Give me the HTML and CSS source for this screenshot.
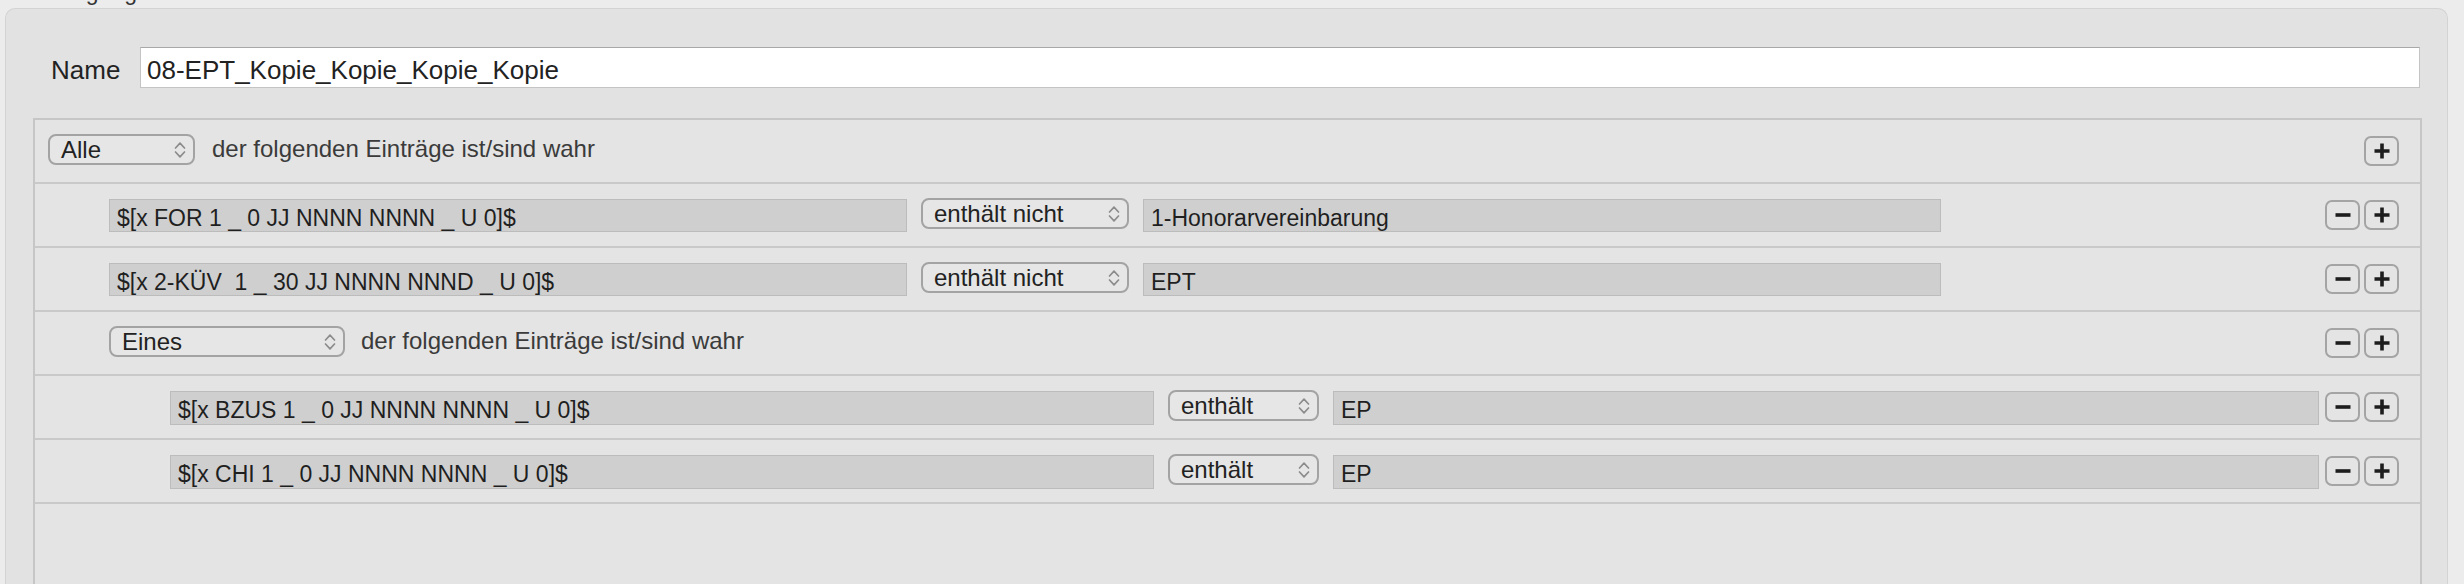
FILE: index.html
```html
<!DOCTYPE html>
<html lang="de">
<head>
<meta charset="utf-8">
<title>Bedingung</title>
<link rel="stylesheet" href="styles.css">
</head>
<body>
<div class="legend">Bedingung</div>
<div class="box">
  <div class="name-row">
    <span class="name-label">Name</span>
    <div class="name-field">08-EPT_Kopie_Kopie_Kopie_Kopie</div>
  </div>
  <div class="rules">
    <div class="row lvl1">
      <div class="popup w-alle"><span class="popup-text">Alle</span><svg class="chev" viewBox="0 0 12 18" width="12" height="18"><path d="M1.5 7 L6 2.2 L10.5 7 M1.5 11 L6 15.8 L10.5 11"/></svg></div>
      <span class="group-label">der folgenden Einträge ist/sind wahr</span>
      <div class="btns">
        <div class="btn"><svg viewBox="0 0 16 16" width="16" height="16"><path d="M8 0.5 V15.5 M0.5 8 H15.5"/></svg></div>
      </div>
    </div>
    <div class="row lvl2">
      <div class="field f2">$[x FOR 1 _ 0 JJ NNNN NNNN _ U 0]$</div>
      <div class="popup w-nicht"><span class="popup-text">enthält nicht</span><svg class="chev" viewBox="0 0 12 18" width="12" height="18"><path d="M1.5 7 L6 2.2 L10.5 7 M1.5 11 L6 15.8 L10.5 11"/></svg></div>
      <div class="field f2">1-Honorarvereinbarung</div>
      <div class="btns">
        <div class="btn"><svg viewBox="0 0 16 16" width="16" height="16"><path d="M0.5 8 H15.5"/></svg></div>
        <div class="btn"><svg viewBox="0 0 16 16" width="16" height="16"><path d="M8 0.5 V15.5 M0.5 8 H15.5"/></svg></div>
      </div>
    </div>
    <div class="row lvl2">
      <div class="field f2">$[x 2-KÜV  1 _ 30 JJ NNNN NNND _ U 0]$</div>
      <div class="popup w-nicht"><span class="popup-text">enthält nicht</span><svg class="chev" viewBox="0 0 12 18" width="12" height="18"><path d="M1.5 7 L6 2.2 L10.5 7 M1.5 11 L6 15.8 L10.5 11"/></svg></div>
      <div class="field f2">EPT</div>
      <div class="btns">
        <div class="btn"><svg viewBox="0 0 16 16" width="16" height="16"><path d="M0.5 8 H15.5"/></svg></div>
        <div class="btn"><svg viewBox="0 0 16 16" width="16" height="16"><path d="M8 0.5 V15.5 M0.5 8 H15.5"/></svg></div>
      </div>
    </div>
    <div class="row lvl2">
      <div class="popup w-eines"><span class="popup-text">Eines</span><svg class="chev" viewBox="0 0 12 18" width="12" height="18"><path d="M1.5 7 L6 2.2 L10.5 7 M1.5 11 L6 15.8 L10.5 11"/></svg></div>
      <span class="group-label gl2">der folgenden Einträge ist/sind wahr</span>
      <div class="btns">
        <div class="btn"><svg viewBox="0 0 16 16" width="16" height="16"><path d="M0.5 8 H15.5"/></svg></div>
        <div class="btn"><svg viewBox="0 0 16 16" width="16" height="16"><path d="M8 0.5 V15.5 M0.5 8 H15.5"/></svg></div>
      </div>
    </div>
    <div class="row lvl3">
      <div class="field f3a">$[x BZUS 1 _ 0 JJ NNNN NNNN _ U 0]$</div>
      <div class="popup w-enth"><span class="popup-text">enthält</span><svg class="chev" viewBox="0 0 12 18" width="12" height="18"><path d="M1.5 7 L6 2.2 L10.5 7 M1.5 11 L6 15.8 L10.5 11"/></svg></div>
      <div class="field f3b">EP</div>
      <div class="btns btns-tight">
        <div class="btn"><svg viewBox="0 0 16 16" width="16" height="16"><path d="M0.5 8 H15.5"/></svg></div>
        <div class="btn"><svg viewBox="0 0 16 16" width="16" height="16"><path d="M8 0.5 V15.5 M0.5 8 H15.5"/></svg></div>
      </div>
    </div>
    <div class="row lvl3">
      <div class="field f3a">$[x CHI 1 _ 0 JJ NNNN NNNN _ U 0]$</div>
      <div class="popup w-enth"><span class="popup-text">enthält</span><svg class="chev" viewBox="0 0 12 18" width="12" height="18"><path d="M1.5 7 L6 2.2 L10.5 7 M1.5 11 L6 15.8 L10.5 11"/></svg></div>
      <div class="field f3b">EP</div>
      <div class="btns btns-tight">
        <div class="btn"><svg viewBox="0 0 16 16" width="16" height="16"><path d="M0.5 8 H15.5"/></svg></div>
        <div class="btn"><svg viewBox="0 0 16 16" width="16" height="16"><path d="M8 0.5 V15.5 M0.5 8 H15.5"/></svg></div>
      </div>
    </div>
  </div>
</div>
</body>
</html>
```
FILE: styles.css
```css
html, body {
  margin: 0;
  padding: 0;
}
body {
  width: 2464px;
  height: 584px;
  overflow: hidden;
  background: #ececec;
  font-family: "Liberation Sans", Arial, sans-serif;
  color: #222222;
}
.legend {
  font-size: 23px;
  line-height: 23px;
  height: 23px;
  margin-top: -19px;
  padding-left: 27px;
  color: #333333;
}
.box {
  margin-top: 4px;
  margin-left: 5px;
  width: 2443px;
  height: 576px;
  box-sizing: border-box;
  border: 1px solid #d3d3d3;
  border-bottom: none;
  border-radius: 10px 10px 0 0;
  background: #e2e2e2;
  padding-top: 38px;
}
.name-row {
  display: flex;
  align-items: baseline;
  padding-left: 45px;
}
.name-label {
  flex: none;
  width: 89px;
  font-size: 26px;
  line-height: 26px;
  color: #222222;
}
.name-field {
  flex: none;
  width: 2280px;
  height: 41px;
  box-sizing: border-box;
  background: #ffffff;
  border: 1px solid #c4c4c4;
  border-top-color: #a8a8a8;
  padding: 9px 0 0 6px;
  font-size: 26px;
  line-height: 26px;
  color: #222222;
}
.rules {
  margin-top: 30px;
  margin-left: 27px;
  width: 2389px;
  height: 466px;
  box-sizing: border-box;
  border: 2px solid #c6c6c6;
  border-bottom: none;
  background: #e4e4e4;
}
.row {
  display: flex;
  align-items: flex-start;
  height: 64px;
  box-sizing: border-box;
  border-bottom: 2px solid #c9c9c9;
  padding-top: 14px;
  padding-right: 21px;
  gap: 14px;
}
.lvl1 { padding-left: 13px; }
.lvl2 { padding-left: 74px; }
.lvl3 { padding-left: 135px; }

.popup {
  flex: none;
  display: flex;
  align-items: flex-start;
  height: 31px;
  box-sizing: border-box;
  border: 2px solid #a3a3a3;
  border-radius: 8px;
  background: #e6e6e6;
  padding: 2px 7px 0 11px;
  font-size: 24px;
  line-height: 24px;
  color: #222222;
}
.popup-text {
  flex: 1;
  white-space: nowrap;
}
.chev {
  flex: none;
  margin-top: 3px;
}
.chev path {
  fill: none;
  stroke: #8c8c8c;
  stroke-width: 1.7;
  stroke-linecap: round;
  stroke-linejoin: round;
}
.w-alle { width: 147px; }
.w-nicht { width: 208px; }
.w-eines { width: 236px; }
.w-enth { width: 151px; }

.group-label {
  flex: none;
  margin-top: 3px;
  margin-left: 3px;
  font-size: 24px;
  line-height: 24px;
  color: #3b3b3b;
  white-space: nowrap;
}
.gl2 { margin-left: 2px; }

.field {
  flex: none;
  height: 33px;
  margin-top: 1px;
  box-sizing: border-box;
  background: #cfcfcf;
  border: 1px solid #bcbcbc;
  padding: 7px 0 0 7px;
  font-size: 23px;
  line-height: 23px;
  color: #1f1f1f;
  white-space: pre;
  overflow: hidden;
}
.f2 { width: 798px; }
.f3a { width: 984px; height: 34px; }
.f3b { width: 986px; height: 34px; }

.btns {
  flex: none;
  display: flex;
  gap: 4px;
  margin-left: auto;
  margin-top: 2px;
}
.btns-tight {
  margin-left: -8px;
}
.btn {
  width: 35px;
  height: 30px;
  box-sizing: border-box;
  border: 2px solid #a4a4a4;
  border-radius: 7px;
  display: flex;
  align-items: center;
  justify-content: center;
}
.btn path {
  fill: none;
  stroke: #1d1d1d;
  stroke-width: 3.6;
}
```
